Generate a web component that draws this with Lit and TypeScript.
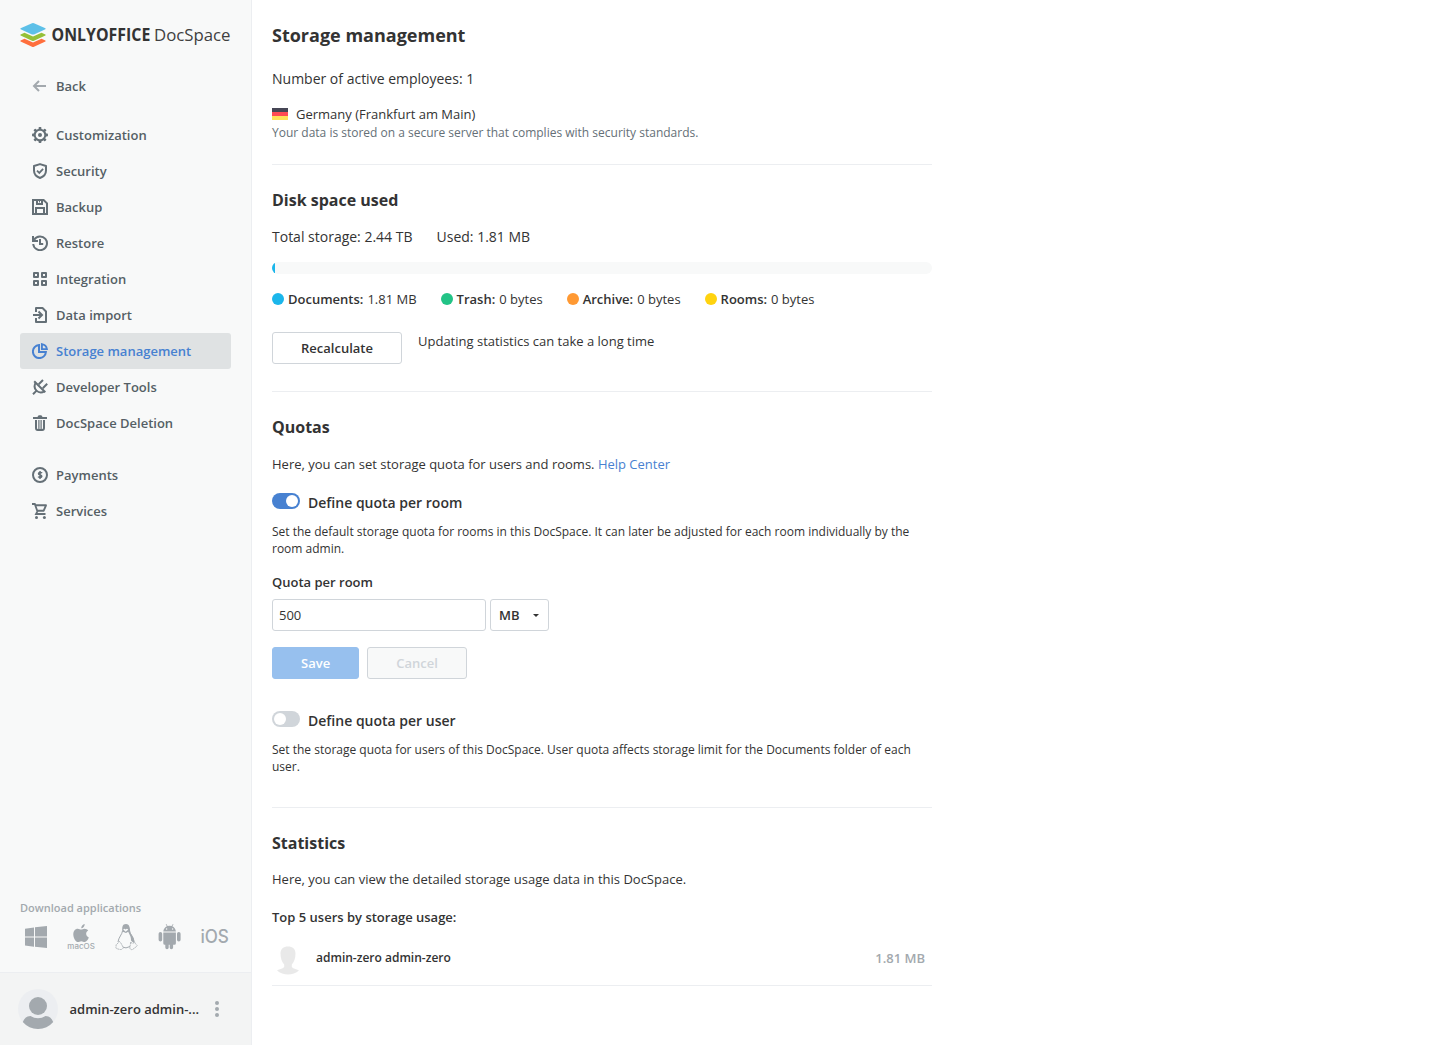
import { LitElement, html, css, svg } from "lit";
import { customElement, property } from "lit/decorators.js";
import { classMap } from "lit/directives/class-map.js";
import { styleMap } from "lit/directives/style-map.js";

const teeth = [0, 45, 90, 135, 180, 225, 270, 315];

const icons: Record<string, unknown> = {
  back: svg`<path d="M14 8H2.500M7 3 2 8l5 5" fill="none" stroke="#A3A9AE" stroke-width="2"/>`,
  gear: svg`<circle cx="8" cy="8" r="5.3" fill="none" stroke="currentColor" stroke-width="2"/>
    <circle cx="8" cy="8" r="2" fill="currentColor"/>
    ${teeth.map(
      (a) => svg`<rect x="6.600" y="0" width="2.800" height="2.600" rx=".8" fill="currentColor" transform="rotate(${a} 8 8)"/>`
    )}`,
  shield: svg`<path d="M8 1.1 14 3v4.600c0 3.600-2.400 6.100-6 7.400-3.600-1.300-6-3.800-6-7.400V3Z" fill="none" stroke="currentColor" stroke-width="2" stroke-linejoin="round"/>
    <path d="M5 7.700 7.300 9.900 11.100 5.900" fill="none" stroke="currentColor" stroke-width="1.800"/>`,
  save: svg`<path d="M1 1h10.600L15 4.400V15H1Z" fill="none" stroke="currentColor" stroke-width="2"/>
    <path d="M5 1v4h5V1M4 15V9h8v6" fill="none" stroke="currentColor" stroke-width="2"/>
    <path d="M7.500 1v2.500" stroke="currentColor" stroke-width="1"/>`,
  restore: svg`<path d="M2.300 4.500A6.900 6.900 0 1 1 1.200 9" fill="none" stroke="currentColor" stroke-width="2"/>
    <path d="M0 1v6h6V5H3.500L2 3.500V1Z" fill="currentColor"/>
    <path d="M8 4v5h3.200" fill="none" stroke="currentColor" stroke-width="2"/>`,
  grid: svg`<path d="M2 2h4v4H2ZM10 2h4v4h-4ZM2 10h4v4H2ZM10 10h4v4h-4Z" fill="none" stroke="currentColor" stroke-width="2" stroke-linejoin="round"/>`,
  import: svg`<path d="M4 5V1h6.500L14 4.500V15H4v-4" fill="none" stroke="currentColor" stroke-width="2" stroke-linejoin="round"/>
    <path d="M1 8h8.500M6.500 4.500 10 8l-3.500 3.500" fill="none" stroke="currentColor" stroke-width="2"/>`,
  pie: svg`<path d="M7 2.100A6.500 6.500 0 1 0 13.900 9H7Z" fill="none" stroke="currentColor" stroke-width="2"/>
    <path d="M9.900 1.100A6 6 0 0 1 14.900 6.100H9.900Z" fill="none" stroke="currentColor" stroke-width="1.900"/>`,
  plug: svg`<path d="M2.200 2.200 13.300 13.300M3.600 3.600C2.200 6.300 2.300 9.500 4.500 11.600c2.200 2.100 5.300 2.200 7.900.8" fill="none" stroke="currentColor" stroke-width="2"/>
    <path d="M4.600 11.600 1 15.200M6.700 5.300 11 1M10.800 9.200 15.200 4.800" fill="none" stroke="currentColor" stroke-width="2"/>`,
  trash: svg`<path d="M1 2h4.500Q6 .2 7 .2h2q1 0 1.500 1.800H15v2H1Z" fill="currentColor"/>
    <path d="M4 5v8Q4 15 5.800 15h4.400Q12 15 12 13V5" fill="none" stroke="currentColor" stroke-width="2"/>
    <path d="M6.900 5v9M9.100 5v9" stroke="currentColor" stroke-width="1.200"/>`,
  coin: svg`<circle cx="8" cy="8" r="7" fill="none" stroke="currentColor" stroke-width="2"/>
    <path d="M10 6.200C9.500 5.300 6.500 5.100 6.500 6.700c0 1.500 3.300.9 3.300 2.500 0 1.700-3 1.400-3.700.4M8.050 4v8" fill="none" stroke="currentColor" stroke-width="1.500"/>`,
  cart: svg`<path d="M0 1h2.800l2.600 7.300L4 11h9.500" fill="none" stroke="currentColor" stroke-width="1.800"/>
    <path d="M3.200 2.300H14L11.700 7.700H5.300" fill="none" stroke="currentColor" stroke-width="1.900" stroke-linejoin="round"/>
    <circle cx="4.500" cy="14.500" r="1.500" fill="currentColor"/><circle cx="12.400" cy="14.500" r="1.500" fill="currentColor"/>`,
};

const nav = [
  [["back", "Back"]],
  [
    ["gear", "Customization"],
    ["shield", "Security"],
    ["save", "Backup"],
    ["restore", "Restore"],
    ["grid", "Integration"],
    ["import", "Data import"],
    ["pie", "Storage management"],
    ["plug", "Developer Tools"],
    ["trash", "DocSpace Deletion"],
  ],
  [
    ["coin", "Payments"],
    ["cart", "Services"],
  ],
];

const usage = [
  ["Documents", "1.81 MB", "#1BB6EB"],
  ["Trash", "0 bytes", "#22C386"],
  ["Archive", "0 bytes", "#FF9933"],
  ["Rooms", "0 bytes", "#FFD30F"],
];

@customElement("side-nav")
export class SideNav extends LitElement {
  static styles = css`
    :host {
      display: flex;
      flex-direction: column;
      box-sizing: border-box;
      width: 252px;
      height: 100%;
      flex: none;
      background: #f8f9f9;
      border-right: 1px solid #eceef1;
    }
    .logo {
      display: block;
      margin: 22px 0 0 20px;
      width: 212px;
      height: 26px;
    }
    .word {
      font-family: "Open Sans", sans-serif;
      font-size: 17px;
      fill: #404040;
    }
    .strong {
      font-weight: 700;
      fill: #333;
    }
    nav {
      display: flex;
      flex-direction: column;
      padding: 20px 20px 0;
    }
    .group {
      margin-bottom: 16px;
    }
    .group.first {
      margin-bottom: 13px;
    }
    .item {
      display: flex;
      align-items: center;
      gap: 8px;
      height: 36px;
      padding-left: 12px;
      border-radius: 3px;
      font-size: 13px;
      font-weight: 600;
      line-height: 20px;
      color: #555f65;
    }
    .item svg {
      width: 16px;
      height: 16px;
      color: #657077;
      flex: none;
    }
    .item.active {
      background: #dfe2e3;
      color: #4781d1;
    }
    .item.active svg {
      color: #4781d1;
    }
    .apps {
      margin-top: auto;
      padding: 0 20px 19px;
      color: #a3a9ae;
    }
    .title {
      font-size: 11px;
      font-weight: 600;
      line-height: 16px;
    }
    .platforms {
      display: flex;
      justify-content: space-between;
      margin-top: 5px;
    }
    .platforms svg {
      width: 32px;
      height: 32px;
      display: block;
    }
    .mac {
      font: 500 7.800px "Inter", sans-serif;
    }
    .ios {
      font: 500 18px "Inter", sans-serif;
    }
    .user {
      display: flex;
      align-items: center;
      height: 72px;
      flex: none;
      padding-left: 18px;
      background: #f3f4f4;
      border-top: 1px solid #eceef1;
      color: #333;
      font-size: 13px;
      font-weight: 600;
    }
    .avatar {
      width: 40px;
      height: 40px;
    }
    .name {
      width: 131px;
      margin-left: 11.500px;
      white-space: nowrap;
    }
    .dots {
      width: 16px;
      height: 16px;
      margin-left: 8px;
    }
  `;

  render() {
    return html`
      <svg class="logo" viewBox="0 0 212 26">
        <path d="M.6 18.500 4.500 16.700l8.500 3.900 8.500-3.900 3.900 1.800q.6.500 0 1L14 24.800q-1 .4-2 0L.6 19.500q-.6-.5 0-1Z" fill="#FF6F3D" />
        <path d="M.6 12.500 4.500 10.700l8.500 3.900 8.500-3.900 3.900 1.800q.6.500 0 1L14 18.800q-1 .4-2 0L.6 13.500q-.6-.5 0-1Z" fill="#95C038" />
        <path d="M.6 6.200 12 1.200q1-.4 2 0l11.400 5q.6.500 0 1L14 12.400q-1 .4-2 0L.6 7.200q-.6-.5 0-1Z" fill="#5DC0E8" />
        <text class="word strong" x="31.600" y="18.900" textLength="98.700" lengthAdjust="spacingAndGlyphs">ONLYOFFICE</text>
        <text class="word" x="134" y="18.900" textLength="76.500" lengthAdjust="spacingAndGlyphs">DocSpace</text>
      </svg>
      <nav>
        ${nav.map(
          (group, i) => html`<div class=${classMap({ group: true, first: i === 0 })}>
            ${group.map(
              ([icon, label]) => html`<div class=${classMap({ item: true, active: icon === "pie" })}>
                <svg viewBox="0 0 16 16">${icons[icon]}</svg><span>${label}</span>
              </div>`
            )}
          </div>`
        )}
      </nav>
      <div class="apps">
        <div class="title">Download applications</div>
        <div class="platforms">
          <svg viewBox="0 0 32 32" fill="currentColor">
            <path d="M5 7.800l9-1.300V15.400H5ZM15 6.300 27 4.900v10.500H15ZM5 16.500h9v9.200L5 24.500ZM15 16.500h12V27l-12-1.300Z" />
          </svg>
          <svg viewBox="0 0 32 32" fill="currentColor">
            <path d="M16.200 7.300c0-2.200 1.500-3.900 3.500-4.300.2 2.200-1.600 4.200-3.500 4.300ZM16.100 8.600c1 0 1.900-.9 3.500-.9 1.400 0 2.800.7 3.600 1.900-3 1.700-2.600 5.500.6 6.900-.8 2.200-2.400 4.500-4.100 4.500-1.300 0-1.800-.8-3.400-.8s-2.100.8-3.300.8c-2.100 0-4.700-4-4.700-7.600 0-3.600 2.100-5.700 4.400-5.700 1.500 0 2.500.9 3.400.9Z" />
            <text class="mac" x="2.300" y="28" textLength="27.500" lengthAdjust="spacingAndGlyphs">macOS</text>
          </svg>
          <svg viewBox="0 0 32 32" fill="none" stroke="currentColor">
            <path d="M12.500 10c-.2 3-4 6.500-4.500 11M19.500 10c.5 3.500 4.800 6 4.500 12.500M12 26q4 2 8-.5" stroke-width="1" />
            <path d="M12.300 10.500C12 6.500 12.200 3 16 3s4 4.500 4.200 7.500c.3 3 4.500 6 4.100 10.500-1.500.5-2.600-.6-3.300-1.600.3-4-2-6.400-2.800-8.700L16 12Z" fill="currentColor" stroke="none" />
            <path d="M13.200 8.500q1.300-1.700 2.300 0 1.600-1.600 2.700.2l-2.600 2Z" fill="#f8f9f9" stroke="none" />
            <path d="M9 20.500c1.300-.2 2.600 3 4.200 5.800-.6 3.500-4 2-6.600 1.300-1.300-.5-.2-2-.5-3.900 1.300-.5 2-1.700 2.900-3.200ZM20.700 21c.3 1.700 3 1.500 4 0 .6 2 1.700 2.600 2.500 3.500-.5 1.200-3 2.700-4.700 4-2.400.7-3-1.400-2.500-3Z" stroke-width=".8" fill="#f8f9f9" stroke-dasharray="2 .5" />
          </svg>
          <svg viewBox="0.4 0 32 32" fill="currentColor">
            <path d="M9.700 10.600c.2-2.700 1.900-4.500 3.600-5.300l-1.200-2 .6-.4 1.300 2.100q2-.6 4 0l1.300-2.100.6.400-1.200 2c1.800.8 3.400 2.600 3.600 5.300Z" />
            <path d="M9.700 11.500h12.600v10.700q0 1.500-1.500 1.500h-1.300v2.800a1.700 1.700 0 0 1-3.400 0v-2.800h-1v2.800a1.700 1.700 0 0 1-3.400 0v-2.800h-.5q-1.500 0-1.500-1.500ZM5 12.800a1.800 1.800 0 0 1 3.600 0v6a1.800 1.800 0 0 1-3.600 0ZM23.400 12.800a1.800 1.800 0 0 1 3.600 0v6a1.800 1.800 0 0 1-3.600 0Z" />
            <circle cx="13" cy="8" r=".7" fill="#f8f9f9" /><circle cx="19" cy="8" r=".7" fill="#f8f9f9" />
          </svg>
          <svg viewBox="0 0 32 32" fill="currentColor">
            <text class="ios" x="1.400" y="22.400" textLength="28.500" lengthAdjust="spacingAndGlyphs">iOS</text>
          </svg>
        </div>
      </div>
      <div class="user">
        <svg class="avatar" viewBox="0 0 40 40">
          <circle cx="20" cy="20" r="20" fill="#ECEEF1" />
          <circle cx="20" cy="17" r="9" fill="#A3A9AE" />
          <path d="M4.800 33Q7 27 12.500 27q3.500 2.200 7.500 2.200t7.500-2.200q5.500 0 7.700 6A20 20 0 0 1 4.800 33Z" fill="#A3A9AE" />
        </svg>
        <span class="name">admin-zero admin-...</span>
        <svg class="dots" viewBox="0 0 16 16" fill="#A3A9AE">
          <circle cx="8" cy="2" r="2" /><circle cx="8" cy="8" r="2" /><circle cx="8" cy="14" r="2" />
        </svg>
      </div>
    `;
  }
}

@customElement("quota-toggle")
export class QuotaToggle extends LitElement {
  @property({ type: Boolean }) checked = false;
  @property() label = "";

  static styles = css`
    :host {
      display: flex;
      gap: 8px;
      height: 20px;
      font-size: 14px;
      font-weight: 600;
      line-height: 20px;
    }
    .track {
      box-sizing: border-box;
      width: 28px;
      height: 16px;
      padding: 2px;
      border-radius: 8px;
      background: #d0d5da;
      display: flex;
    }
    .track.on {
      background: #4781d1;
      justify-content: flex-end;
    }
    .knob {
      width: 12px;
      height: 12px;
      border-radius: 50%;
      background: #fff;
    }
  `;

  render() {
    return html`<span class=${classMap({ track: true, on: this.checked })}><span class="knob"></span></span
      ><span>${this.label}</span>`;
  }
}

@customElement("app-root")
export class AppRoot extends LitElement {
  static styles = css`
    :host {
      display: flex;
      height: 1045px;
      background: #fff;
      color: #333;
      font-family: "Open Sans", sans-serif;
      font-size: 13px;
      line-height: 20px;
    }
    main {
      width: 660px;
      padding: 23px 0 0 20px;
    }
    h1,
    h2,
    p {
      margin: 0;
    }
    h1 {
      font-size: 18px;
      line-height: 24px;
    }
    h2 {
      font-size: 16px;
      line-height: 22px;
    }
    section {
      border-top: 1px solid #eceef1;
      padding-top: 24px;
    }
    .employees {
      font-size: 14px;
      margin-top: 22px;
    }
    .region {
      display: flex;
      align-items: center;
      gap: 8px;
      margin-top: 15px;
    }
    .flag {
      width: 16px;
      height: 12px;
    }
    .note {
      font-size: 12px;
      line-height: 16px;
      color: #657077;
      margin: 1px 0 23px;
    }
    .totals {
      display: flex;
      gap: 24px;
      margin-top: 16px;
      font-size: 14px;
    }
    .bar {
      height: 12px;
      margin-top: 15px;
      border-radius: 29px;
      background: #f8f9f9;
      overflow: hidden;
    }
    .fill {
      height: 100%;
    }
    .legend {
      display: flex;
      gap: 24px;
      margin-top: 15px;
    }
    .entry {
      display: flex;
      align-items: center;
      gap: 4px;
    }
    .dot {
      width: 12px;
      height: 12px;
      border-radius: 50%;
    }
    b {
      font-weight: 600;
    }
    .recalc {
      display: flex;
      gap: 16px;
      margin: 23px 0 27px;
    }
    .button {
      box-sizing: border-box;
      height: 32px;
      border: 1px solid #d0d5da;
      border-radius: 3px;
      padding: 0 28px;
      background: #fff;
      color: #333;
      font: 600 13px/20px "Open Sans", sans-serif;
    }
    .button.wide {
      width: 130px;
    }
    .button.save {
      width: 87px;
      background: #97c0ee;
      border-color: #97c0ee;
      color: #fff;
    }
    .button.cancel {
      width: 100px;
      background: #f8f9f9;
      color: #d0d5da;
    }
    .hint {
      margin-top: -1px;
    }
    .intro {
      margin-top: 16px;
    }
    .link {
      color: #4781d1;
    }
    .room {
      margin-top: 19px;
    }
    .about {
      font-size: 12px;
      line-height: 17px;
      margin-top: 10px;
    }
    .label {
      font-weight: 600;
      margin-top: 15px;
    }
    .fields {
      display: flex;
      gap: 4px;
      margin-top: 7px;
    }
    .input,
    .unit {
      box-sizing: border-box;
      height: 32px;
      border: 1px solid #d0d5da;
      border-radius: 3px;
      display: flex;
      align-items: center;
    }
    .input {
      width: 214px;
      padding: 0 6px;
    }
    .unit {
      width: 59px;
      padding: 0 9px 0 8px;
      justify-content: space-between;
      font-weight: 600;
    }
    .caret {
      width: 6px;
      height: 4px;
    }
    .actions {
      display: flex;
      gap: 8px;
      margin-top: 16px;
    }
    .person {
      margin-top: 32px;
    }
    .person-about {
      margin-bottom: 32px;
    }
    .stats-intro {
      margin-top: 15px;
    }
    .top {
      font-weight: 600;
      margin-top: 18px;
    }
    .row {
      display: flex;
      align-items: center;
      box-sizing: border-box;
      height: 59px;
      padding: 4px 7px 0 0;
      border-bottom: 1px solid #eceef1;
      font-size: 12px;
      font-weight: 600;
    }
    .person-icon {
      width: 32px;
      height: 32px;
      margin: 3px 12px 0 0;
    }
    .size {
      margin-left: auto;
      font-size: 13px;
      color: #a3a9ae;
    }
  `;

  render() {
    return html`
      <side-nav></side-nav>
      <main>
        <h1>Storage management</h1>
        <p class="employees">Number of active employees: 1</p>
        <div class="region">
          <svg class="flag" viewBox="0 0 16 12">
            <rect width="16" height="4" fill="#464655" />
            <rect y="4" width="16" height="4" fill="#FF4B55" />
            <rect y="8" width="16" height="4" fill="#FFE15A" />
          </svg>
          <span>Germany (Frankfurt am Main)</span>
        </div>
        <p class="note">Your data is stored on a secure server that complies with security standards.</p>
        <section>
          <h2>Disk space used</h2>
          <div class="totals"><span>Total storage: 2.44 TB</span><span>Used: 1.81 MB</span></div>
          <div class="bar"><div class="fill" style=${styleMap({ width: "3px", background: usage[0][2] })}></div></div>
          <div class="legend">
            ${usage.map(
              ([name, size, color]) => html`<div class="entry">
                <span class="dot" style=${styleMap({ background: color })}></span><b>${name}:</b><span>${size}</span>
              </div>`
            )}
          </div>
          <div class="recalc">
            <button class="button wide">Recalculate</button>
            <span class="hint">Updating statistics can take a long time</span>
          </div>
        </section>
        <section>
          <h2>Quotas</h2>
          <p class="intro">
            Here, you can set storage quota for users and rooms. <span class="link">Help Center</span>
          </p>
          <quota-toggle class="room" checked label="Define quota per room"></quota-toggle>
          <p class="about">
            Set the default storage quota for rooms in this DocSpace. It can later be adjusted for each room
            individually by the room admin.
          </p>
          <div class="label">Quota per room</div>
          <div class="fields">
            <div class="input">500</div>
            <div class="unit">
              <span>MB</span>
              <svg class="caret" viewBox="0 0 6 4"><path d="M0 1h6L3 4Z" fill="#333" /></svg>
            </div>
          </div>
          <div class="actions">
            <button class="button save">Save</button>
            <button class="button cancel">Cancel</button>
          </div>
          <quota-toggle class="person" label="Define quota per user"></quota-toggle>
          <p class="about person-about">
            Set the storage quota for users of this DocSpace. User quota affects storage limit for the Documents folder
            of each user.
          </p>
        </section>
        <section>
          <h2>Statistics</h2>
          <p class="stats-intro">Here, you can view the detailed storage usage data in this DocSpace.</p>
          <div class="top">Top 5 users by storage usage:</div>
          <div class="row">
            <svg class="person-icon" viewBox="0 0 32 32" fill="#E9E9E9">
              <path d="M16 2.500c4.500 0 7.500 2.600 7.500 7 0 5-1.500 8.700-3.700 11v2.300c1 2 4.700 2.200 7.200 3.800C24 29.500 20 30.500 16 30.500s-8-1-11-3.900c2.500-1.600 6.200-1.800 7.200-3.800v-2.300c-2.200-2.300-3.700-6-3.700-11 0-4.400 3-7 7.500-7Z" />
            </svg>
            <span>admin-zero admin-zero</span>
            <span class="size">1.81 MB</span>
          </div>
        </section>
      </main>
    `;
  }
}
